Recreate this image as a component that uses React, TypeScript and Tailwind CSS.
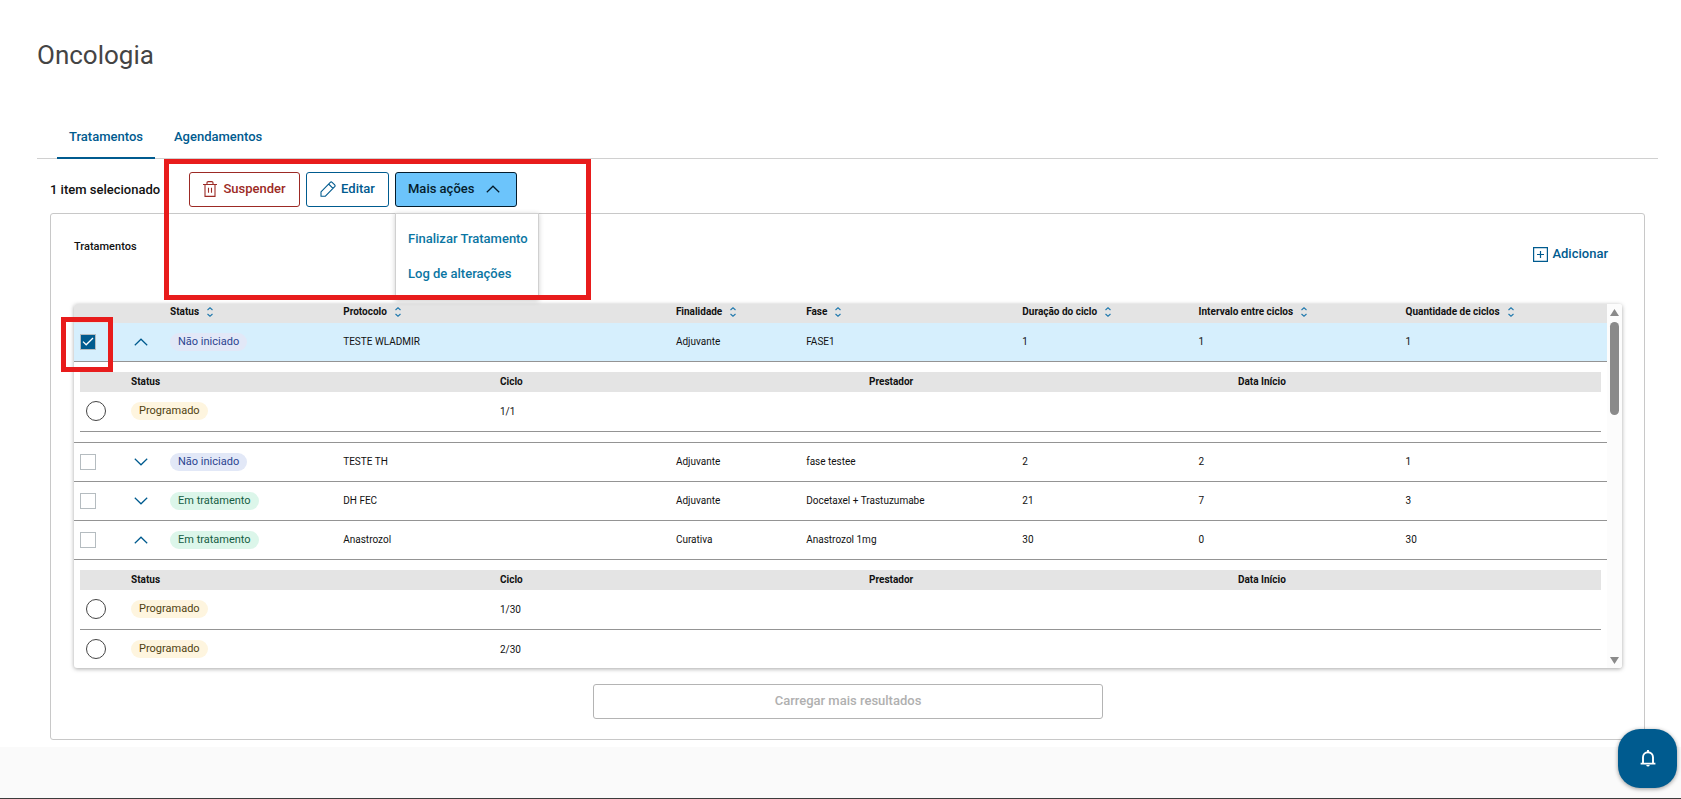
import { useState } from 'react';

type Cycle = { status: string; cycle: string };

type Treatment = {
  id: number;
  status: string;
  protocol: string;
  purpose: string;
  phase: string;
  duration: string;
  interval: string;
  amount: string;
  cycles?: Cycle[];
};

const columns = [
  { label: 'Status', width: 'w-[11.3%]' },
  { label: 'Protocolo', width: 'w-[21.7%]' },
  { label: 'Finalidade', width: 'w-[8.5%]' },
  { label: 'Fase', width: 'w-[14.1%]' },
  { label: 'Duração do ciclo', width: 'w-[11.5%]' },
  { label: 'Intervalo entre ciclos', width: 'w-[13.5%]' },
  { label: 'Quantidade de ciclos', width: '' },
];

const treatments: Treatment[] = [
  {
    id: 1,
    status: 'Não iniciado',
    protocol: 'TESTE WLADMIR',
    purpose: 'Adjuvante',
    phase: 'FASE1',
    duration: '1',
    interval: '1',
    amount: '1',
    cycles: [{ status: 'Programado', cycle: '1/1' }],
  },
  {
    id: 2,
    status: 'Não iniciado',
    protocol: 'TESTE TH',
    purpose: 'Adjuvante',
    phase: 'fase testee',
    duration: '2',
    interval: '2',
    amount: '1',
  },
  {
    id: 3,
    status: 'Em tratamento',
    protocol: 'DH FEC',
    purpose: 'Adjuvante',
    phase: 'Docetaxel + Trastuzumabe',
    duration: '21',
    interval: '7',
    amount: '3',
  },
  {
    id: 4,
    status: 'Em tratamento',
    protocol: 'Anastrozol',
    purpose: 'Curativa',
    phase: 'Anastrozol 1mg',
    duration: '30',
    interval: '0',
    amount: '30',
    cycles: [
      { status: 'Programado', cycle: '1/30' },
      { status: 'Programado', cycle: '2/30' },
    ],
  },
];

const badgeColors: Record<string, string> = {
  'Não iniciado': 'bg-[#e2e8f7] text-[#2a4490]',
  'Em tratamento': 'bg-[#dcf6ea] text-[#155d43]',
  Programado: 'bg-[#fef5df] text-[#4f3f10]',
};

const Badge = ({ status }: { status: string }) => (
  <span className={`inline-block h-[18px] rounded-full px-2 align-middle text-[11px] leading-[18px] ${badgeColors[status]}`}>
    {status}
  </span>
);

const Chevron = ({ up, className }: { up?: boolean; className?: string }) => (
  <svg width="14" height="8" viewBox="0 0 14 8" fill="none" stroke="currentColor" strokeWidth="1.2" className={className}>
    <path d={up ? 'M0.8 7.2 7 1.2l6.2 6' : 'M0.8 0.8 7 6.8l6.2-6'} />
  </svg>
);

const SortIcon = () => (
  <svg width="6" height="10" viewBox="0 0 6 10" fill="none" stroke="#1f78ad" strokeWidth="1.1">
    <path d="M0.5 3 3 0.8 5.5 3M0.5 7 3 9.2 5.5 7" />
  </svg>
);

const TrashIcon = () => (
  <svg width="14" height="16" viewBox="0 0 14 16" fill="none" stroke="currentColor" strokeWidth="1.1">
    <path d="M0 3.5h14M2 3.5v11.9h10V3.5M4 3.5V1.8Q4 .6 5.2.6h3.6Q10 .6 10 1.8v1.7M5.5 6.8v5M8.5 6.8v5" />
  </svg>
);

const PencilIcon = () => (
  <svg width="16" height="16" viewBox="0 0 16 16" fill="none" stroke="currentColor" strokeWidth="1.1" strokeLinejoin="round">
    <path d="M1 15.2v-4.4L10.3 1.3q.9-.8 1.8 0l2.6 2.6q.8.9 0 1.8L5.4 15.2zM8.6 3l4.4 4.4" />
  </svg>
);

const PlusSquareIcon = () => (
  <svg width="15" height="15" viewBox="0 0 15 15" fill="none" stroke="currentColor">
    <path d="M.6.6h13.8v13.8H.6zM7.5 4v7M4 7.5h7" strokeWidth="1.2" />
  </svg>
);

const BellIcon = () => (
  <svg width="16" height="17" viewBox="0 0 16 17" fill="none" stroke="currentColor" strokeWidth="1.9">
    <path d="M0.6 13.6h14.8M3 13.6V7.2a5 5 0 0 1 10 0v6.4M8 0v2.4" />
    <path d="M6.2 15h3.6q-.4 1.6-1.8 1.6T6.2 15" fill="currentColor" stroke="none" />
  </svg>
);

const CycleTable = ({ id, cycles }: { id: number; cycles: Cycle[] }) => (
  <table className="w-full table-fixed border-separate border-spacing-0 text-left">
    <thead>
      <tr className="h-5 bg-[#e4e4e4] text-[10px] leading-[14px] font-bold *:px-0 *:pt-0 *:pb-px">
        <th className="w-[51px]"></th>
        <th className="w-[24.26%]">Status</th>
        <th className="w-[24.26%]">Ciclo</th>
        <th className="w-[24.26%]">Prestador</th>
        <th>Data Início</th>
      </tr>
    </thead>
    <tbody>
      {cycles.map((item) => (
        <tr key={item.cycle} className="h-10 text-[10px] *:border-b *:border-[#949494] *:px-0 *:pt-0 *:pb-px">
          <td>
            <input
              type="radio"
              name={`ciclo-${id}`}
              aria-label={`Ciclo ${item.cycle}`}
              className="ml-[6px] block size-5 appearance-none rounded-full border border-[#444] checked:border-[6px]"
            />
          </td>
          <td><Badge status={item.status} /></td>
          <td>{item.cycle}</td>
          <td></td>
          <td></td>
        </tr>
      ))}
    </tbody>
  </table>
);

const App = () => {
  const [selected, setSelected] = useState<number[]>([1]);

  const toggle = (id: number) =>
    setSelected((prev) => (prev.includes(id) ? prev.filter((item) => item !== id) : [...prev, id]));

  return (
    <div className="relative flex min-h-screen flex-col border-b border-[#3c3c3c] bg-[#fafafa] font-[Roboto,sans-serif] text-[#111]">
      <main className="bg-white pt-[39px] pr-[23px] pb-[7px] pl-[37px]">
        <h1 className="text-[26px] leading-8 text-[#444]">Oncologia</h1>

        <nav className="mt-11 flex gap-[7px] border-b border-[#d0d0d0] pl-5 text-[13px] font-medium text-[#005b8f]">
          <a href="#tratamentos" className="-mb-px h-11 border-b-2 border-[#005b8f] px-3 pt-3 leading-5">Tratamentos</a>
          <a href="#agendamentos" className="-mb-px h-11 px-3 pt-3 leading-5">Agendamentos</a>
        </nav>

        <div className="relative mx-[13px] flex items-center gap-[6px] py-[13px] pb-[6px] text-[13px] font-medium">
          <p className="w-[133px] shrink-0 whitespace-nowrap">{selected.length} item selecionado</p>
          <button className="flex h-[35px] w-[111px] items-center justify-center gap-[6px] rounded-[3px] border border-[#9c2a25] pb-px text-[#9c2a25]">
            <TrashIcon />
            Suspender
          </button>
          <button className="flex h-[35px] w-[83px] items-center justify-center gap-[5px] rounded-[3px] border border-[#005b8f] pb-px text-[#005b8f]">
            <PencilIcon />
            Editar
          </button>
          <div className="relative">
            <button aria-expanded="true" className="flex h-[35px] w-[122px] items-center rounded-[3px] border border-[#041c2c] bg-[#6cc4fb] pb-px pl-3 text-[#041c2c]">
              Mais ações
              <Chevron up className="ml-3" />
            </button>
            <div className="absolute top-full left-0 z-10 mt-[6px] flex h-[87px] w-[144px] flex-col border-x border-t border-[#d0d0d0] bg-white pt-[7px] text-[#0b76a3] shadow-[0_1px_5px_rgba(0,0,0,0.2)]">
              <button className="h-[35px] pl-3 text-left whitespace-nowrap">Finalizar Tratamento</button>
              <button className="h-[35px] pl-3 text-left whitespace-nowrap">Log de alterações</button>
            </div>
          </div>
          <div className="pointer-events-none absolute top-0 left-[114px] z-20 h-[141px] w-[427px] border-5 border-[#e81c1c]"></div>
        </div>

        <section className="mx-[13px] rounded-[3px] border border-[#c8c8c8] pr-[22px] pb-5 pl-[23px]">
          <div className="flex h-[90px] items-start justify-between pr-[14px]">
            <h2 className="mt-[25px] text-[11px] leading-4 font-medium">Tratamentos</h2>
            <button className="mt-[30px] flex items-center gap-1 text-[13px] leading-5 font-medium text-[#005b8f]">
              <PlusSquareIcon />
              Adicionar
            </button>
          </div>

          <div className="relative">
            <div className="flex h-[364px] overflow-hidden rounded-[3px] shadow-[0_1px_4px_rgba(0,0,0,0.35)]">
              <div className="min-w-0 flex-1">
                <table className="w-full table-fixed border-separate border-spacing-0 text-left">
                  <thead>
                    <tr className="h-[19px] bg-[#e4e4e4] text-[10px] leading-[14px] font-medium *:px-0 *:pt-0 *:pb-[3px]">
                      <th className="w-[60px]"></th>
                      <th className="w-9"></th>
                      {columns.map((column) => (
                        <th key={column.label} className={column.width}>
                          <div className="flex items-center gap-2">
                            {column.label}
                            <SortIcon />
                          </div>
                        </th>
                      ))}
                    </tr>
                  </thead>
                  <tbody>
                    {treatments.map((item) => {
                      const checked = selected.includes(item.id);
                      return [
                        <tr key={item.id} className={`h-[39px] text-[10px] *:border-b *:border-[#949494] *:px-0 *:pt-0 *:pb-px ${checked ? 'bg-[#d6effd]' : ''}`}>
                          <td>
                            <label className="ml-[6px] grid size-4 place-items-center">
                              <input
                                type="checkbox"
                                checked={checked}
                                onChange={() => toggle(item.id)}
                                aria-label={item.protocol}
                                className="size-4 appearance-none border border-[#b5bcc0] bg-white [grid-area:1/1] checked:bg-[#005b8f]"
                              />
                              {checked && (
                                <svg width="12" height="9" viewBox="0 0 12 9" fill="none" stroke="white" strokeWidth="1.3" className="pointer-events-none [grid-area:1/1]">
                                  <path d="M1 4.6 4.2 7.8 11 1" />
                                </svg>
                              )}
                            </label>
                          </td>
                          <td>
                            <button aria-label="Expandir" className="block text-[#005b8f]">
                              <Chevron up={!!item.cycles} />
                            </button>
                          </td>
                          <td><Badge status={item.status} /></td>
                          <td>{item.protocol}</td>
                          <td>{item.purpose}</td>
                          <td>{item.phase}</td>
                          <td>{item.duration}</td>
                          <td>{item.interval}</td>
                          <td>{item.amount}</td>
                        </tr>,
                        item.cycles && (
                          <tr key={`${item.id}-cycles`}>
                            <td colSpan={9} className="border-b border-[#949494] px-[6px] py-[10px]">
                              <CycleTable id={item.id} cycles={item.cycles} />
                            </td>
                          </tr>
                        ),
                      ];
                    })}
                  </tbody>
                </table>
              </div>
              <div className="flex w-[15px] flex-col items-center bg-[#fcfcfc] pt-[5px] pb-1">
                <svg width="9" height="7" viewBox="0 0 9 7" fill="#8a8a8a"><path d="M4.5 0 9 7H0z" /></svg>
                <div className="mt-[6px] h-[93px] w-[9px] rounded-full bg-[#8a8a8a]"></div>
                <svg width="9" height="7" viewBox="0 0 9 7" fill="#8a8a8a" className="mt-auto"><path d="M4.5 7 0 0h9z" /></svg>
              </div>
            </div>
            <div className="pointer-events-none absolute top-[13px] -left-[13px] h-[55px] w-[52px] border-5 border-[#e81c1c]"></div>
          </div>

          <button className="mx-auto mt-4 block h-[35px] w-[33%] rounded-[3px] border border-[#b4b4b4] pb-px text-[13px] font-medium text-[#b0b0b0]">
            Carregar mais resultados
          </button>
        </section>
      </main>

      <button aria-label="Notificações" className="absolute right-1 bottom-[10px] flex size-[59px] items-center justify-center rounded-[22px] bg-[#005b8f] text-white shadow-[0_1px_4px_rgba(0,0,0,0.4)]">
        <BellIcon />
      </button>
    </div>
  );
};

export default App;
